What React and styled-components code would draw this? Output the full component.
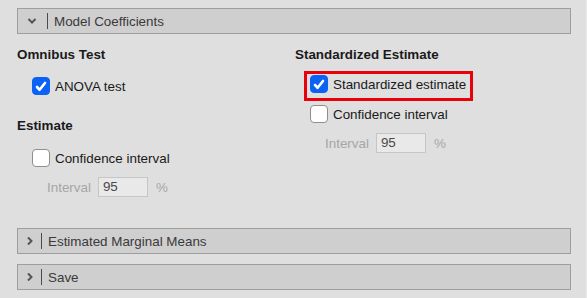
import React from 'react'
import styled, { createGlobalStyle } from 'styled-components'

const GlobalStyle = createGlobalStyle`
    body {
        margin: 0;
        background: #dfdfdf;
        font-family: "Liberation Sans", Arial, sans-serif;
        color: #1a1a1a;
    }
`

const Page = styled.div`
    width: 587px;
    height: 298px;
    box-sizing: border-box;
    padding: 8px 15px 0 17px;
    background: #dfdfdf;
    border-right: 1px solid #e9e9e9;
    overflow: hidden;
`

const PanelHeader = styled.div`
    display: flex;
    align-items: center;
    height: 26px;
    box-sizing: border-box;
    border: 1px solid #9e9e9e;
    background: #cfcfcf;
    padding-left: 9px;
    margin-top: ${p => p.$gap || 0}px;
    font-size: 13.4px;
    color: #3a3a3a;
`

const Chevron = styled.svg`
    width: ${p => (p.$open ? 10 : 6)}px;
    height: 10px;
    flex: none;
`

const Divider = styled.span`
    width: 1px;
    height: 16px;
    background: #4a4a4a;
    margin: 0 6px 0 ${p => (p.$open ? 10 : 8)}px;
`

const Columns = styled.div`
    display: grid;
    grid-template-columns: 278px 1fr;
    padding-top: 13px;
    height: 181px;
    box-sizing: border-box;
`

const Column = styled.div`
    display: flex;
    flex-direction: column;
`

const Heading = styled.div`
    font-size: 13.4px;
    font-weight: bold;
    line-height: 16px;
    margin-top: ${p => p.$top || 0}px;
`

const Row = styled.label`
    display: flex;
    align-items: center;
    gap: 5px;
    height: 18px;
    font-size: 13.4px;
    margin-left: ${p => (p.$bare ? 0 : 15)}px;
    margin-top: ${p => p.$top || 0}px;
`

const Highlight = styled.div`
    align-self: flex-start;
    border: 3px solid #e8000a;
    padding: 1px 4px 5px 3px;
    margin: 8px 0 0 9px;
`

const Box = styled.span`
    width: 18px;
    height: 18px;
    box-sizing: border-box;
    border-radius: 4px;
    display: flex;
    align-items: center;
    justify-content: center;
    background: ${p => (p.$checked ? '#0b62f5' : '#ffffff')};
    border: 1px solid ${p => (p.$checked ? '#0b62f5' : '#8e8e8e')};
`

const Sub = styled.div`
    display: flex;
    align-items: center;
    margin: 10px 0 0 30px;
    font-size: 13.4px;
    color: #a6a6a6;
`

const NumInput = styled.div`
    width: 50px;
    height: 20px;
    box-sizing: border-box;
    border: 1px solid #c6c6c6;
    background: #e9e9e9;
    color: #4a4a4a;
    font-size: 13.4px;
    line-height: 18px;
    padding-left: 4px;
    margin: 0 8px 0 7px;
`

function Check({ checked }) {
    return (
        <Box $checked={checked}>
            {checked && (
                <svg width="12" height="11" viewBox="0 0 12 11">
                    <path d="M2 6 L4.6 8.8 L10 2" fill="none" stroke="#fff" strokeWidth="2.6" strokeLinecap="round" strokeLinejoin="round" />
                </svg>
            )}
        </Box>
    )
}

function Header({ open, title, gap }) {
    return (
        <PanelHeader $gap={gap}>
            {open ? (
                <Chevron $open viewBox="0 0 10 10">
                    <path d="M1.5 3 L5 6.5 L8.5 3" fill="none" stroke="#555" strokeWidth="2" />
                </Chevron>
            ) : (
                <Chevron viewBox="0 0 6 10">
                    <path d="M1 1.5 L4.5 5 L1 8.5" fill="none" stroke="#555" strokeWidth="2" />
                </Chevron>
            )}
            <Divider $open={open} />
            {title}
        </PanelHeader>
    )
}

function Interval() {
    return (
        <Sub>
            Interval
            <NumInput>95</NumInput>
            %
        </Sub>
    )
}

export default function App() {
    return (
        <Page>
            <GlobalStyle />
            <Header open title="Model Coefficients" />
            <Columns>
                <Column>
                    <Heading>Omnibus Test</Heading>
                    <Row $top={14}>
                        <Check checked />
                        ANOVA test
                    </Row>
                    <Heading $top={23}>Estimate</Heading>
                    <Row $top={15}>
                        <Check />
                        Confidence interval
                    </Row>
                    <Interval />
                </Column>
                <Column>
                    <Heading>Standardized Estimate</Heading>
                    <Highlight>
                        <Row $bare>
                            <Check checked />
                            Standardized estimate
                        </Row>
                    </Highlight>
                    <Row $top={4}>
                        <Check />
                        Confidence interval
                    </Row>
                    <Interval />
                </Column>
            </Columns>
            <Header title="Estimated Marginal Means" gap={13} />
            <Header title="Save" gap={10} />
        </Page>
    )
}
